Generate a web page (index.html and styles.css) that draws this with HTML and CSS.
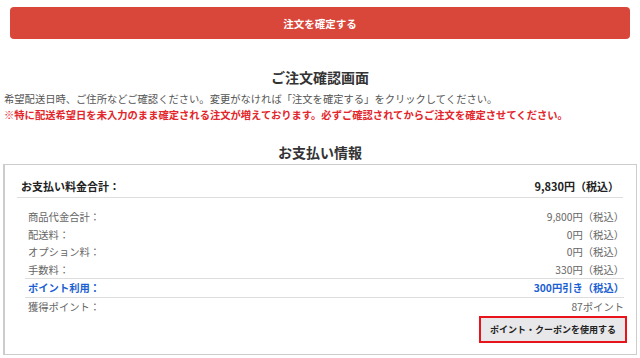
FILE: index.html
```html
<!DOCTYPE html>
<html lang="ja">
<head>
  <meta charset="UTF-8">
  <meta name="viewport" content="width=device-width, initial-scale=1.0">
  <title>ご注文確認画面</title>
  <link rel="stylesheet" href="styles.css">
</head>
<body>
  <div class="page">
    <button class="confirm-btn">注文を確定する</button>

    <h2 class="page-title">ご注文確認画面</h2>
    <p class="lead">希望配送日時、ご住所などご確認ください。変更がなければ「注文を確定する」をクリックしてください。</p>
    <p class="warning">※特に配送希望日を未入力のまま確定される注文が増えております。必ずご確認されてからご注文を確定させてください。</p>

    <h3 class="section-title">お支払い情報</h3>

    <div class="pay-box">
      <div class="total-row">
        <span>お支払い料金合計：</span>
        <span>9,830円（税込）</span>
      </div>

      <div class="items">
        <div class="item"><span>商品代金合計：</span><span>9,800円（税込）</span></div>
        <div class="item"><span>配送料：</span><span>0円（税込）</span></div>
        <div class="item"><span>オプション料：</span><span>0円（税込）</span></div>
        <div class="item"><span>手数料：</span><span>330円（税込）</span></div>
        <div class="item item-point"><span>ポイント利用：</span><span>300円引き（税込）</span></div>
        <div class="item item-sep"><span>獲得ポイント：</span><span>87ポイント</span></div>
      </div>

      <div class="coupon-row">
        <button class="coupon-btn">ポイント・クーポンを使用する</button>
      </div>
    </div>
  </div>
</body>
</html>
```

FILE: styles.css
```css
* { margin: 0; padding: 0; box-sizing: border-box; }
body { font-family: "Noto Sans CJK JP", "Noto Sans", sans-serif; background: white; color: #555; }
.page { padding: 7px 3px 0; }
.confirm-btn { display: block; width: calc(100% - 14px); margin: 0 7px; height: 32px; background: #d9463a; color: white; border: none; border-radius: 4px; font-family: inherit; font-size: 10.5px; font-weight: 700; cursor: pointer; }
.page-title { margin-top: 28px; text-align: center; font-size: 14px; line-height: 20px; font-weight: 700; color: #333; }
.lead { margin-top: 4px; padding-left: 1px; font-size: 10.3px; line-height: 16px; color: #555; }
.warning { padding-left: 1px; font-size: 10.3px; line-height: 16px; font-weight: 700; color: #e3262b; }
.section-title { margin-top: 19px; margin-bottom: 2px; text-align: center; font-size: 14px; line-height: 20px; font-weight: 700; color: #333; }
.pay-box { border: 1px solid #ccc; border-left-width: 2px; padding: 13px 13px 11px 12px; }
.total-row { display: flex; justify-content: space-between; padding: 0 4px 3px; border-bottom: 1px solid #ddd; font-size: 11px; line-height: 16px; font-weight: 700; color: #222; }
.items { margin: 10px -1px 0 8px; }
.item { display: flex; justify-content: space-between; padding-left: 3px; font-size: 10.3px; line-height: 17.5px; color: #666; }
.item-point { border-top: 1px solid #ddd; font-weight: 700; color: #1b5fd2; }
.item-sep { border-top: 1px solid #ddd; }
.coupon-row { display: flex; justify-content: flex-end; margin: 1px -4px 0 0; }
.coupon-btn { height: 27px; padding: 0 9px; background: #e8e8ea; border: 2px solid #e8141b; font-family: inherit; font-size: 9px; font-weight: 700; color: #222; cursor: pointer; }
```
